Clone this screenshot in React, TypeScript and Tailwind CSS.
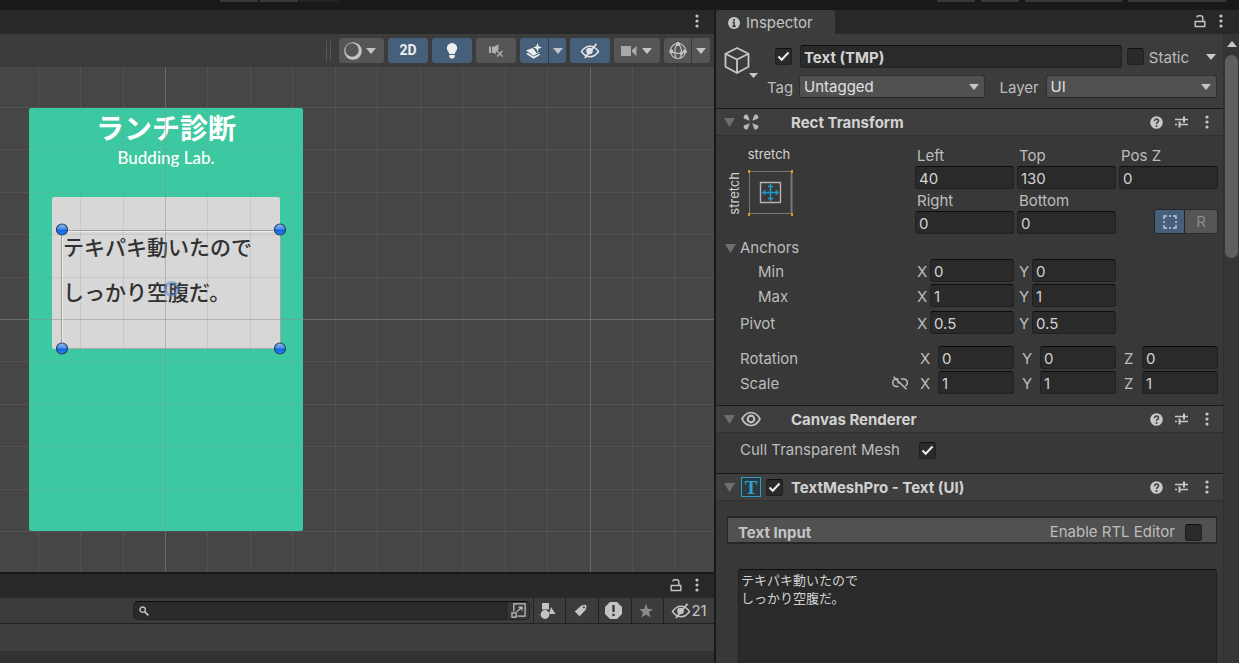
import { useState } from "react";
import type { ReactNode } from "react";

const GRID = 42.45;
const GRID_X = 165;
const GRID_Y = 252;

const steps = Array.from({ length: 61 }, (_, i) => i - 20);

function Triangle({ className = "" }: { className?: string }) {
  return (
    <svg viewBox="0 0 10 6" className={`h-[6px] w-[10px] shrink-0 pointer-events-none ${className}`} fill="currentColor">
      <path d="M0 0h10L5 6z" />
    </svg>
  );
}

function Foldout() {
  return (
    <svg viewBox="0 0 11 9" className="h-[9px] w-[11px] shrink-0 text-[#6e6e6e]" fill="currentColor">
      <path d="M0 0h11L5.5 9z" />
    </svg>
  );
}

function Kebab() {
  return (
    <svg viewBox="0 0 4 14" className="h-[14px] w-[4px]" fill="currentColor">
      <circle cx="2" cy="2" r="1.6" />
      <circle cx="2" cy="7" r="1.6" />
      <circle cx="2" cy="12" r="1.6" />
    </svg>
  );
}

function Unlocked() {
  return (
    <svg viewBox="0 0 12 13" className="h-[13px] w-[12px]" fill="none" stroke="currentColor" strokeWidth="1.4">
      <path d="M1.2 6.500h9.600v5H1.200z" />
      <path d="M3 2.500V2C3 1.200 3.800.8 5 .8h1.600c1.300 0 2.200.8 2.200 2v3.700" />
    </svg>
  );
}

function EyeOff({ className = "" }: { className?: string }) {
  return (
    <svg viewBox="0 0 20 16" className={`h-[16px] w-[20px] shrink-0 ${className}`} fill="none" stroke="currentColor">
      <path d="M1.500 8.500C4 4.800 6.800 3.200 10 3.200s6 1.600 8.500 5.300c-2.500 3.600-5.300 5.200-8.500 5.200s-6-1.600-8.500-5.200z" strokeWidth="1.500" />
      <circle cx="9.500" cy="8" r="3.300" fill="currentColor" stroke="none" />
      <path d="M16.500.8 4.800 15" strokeWidth="1.800" />
    </svg>
  );
}

function Checkbox({ label, checked = false }: { label: string; checked?: boolean }) {
  return (
    <span className="relative flex size-[17px] shrink-0">
      <input
        type="checkbox"
        aria-label={label}
        defaultChecked={checked}
        className="peer size-full appearance-none rounded-[3px] border border-[#1f1f1f] border-t-[#0f0f0f] bg-[#2a2a2a]"
      />
      <svg
        viewBox="0 0 17 17"
        className="pointer-events-none absolute inset-0 hidden peer-checked:block"
        fill="none"
        stroke="#eeeeee"
        strokeWidth="2"
      >
        <path d="M3.500 8.500l3.200 3.200L13.500 4.500" />
      </svg>
    </span>
  );
}

function Field({ label, value, wide = false }: { label: string; value: string; wide?: boolean }) {
  return (
    <label className="flex items-center pl-[2px]">
      <span className={wide ? "w-[21px] shrink-0 pl-[3px] pt-[2px]" : "w-[13px] shrink-0 pt-[2px]"}>{label}</span>
      <Box value={value} />
    </label>
  );
}

function Box({ value, label }: { value: string; label?: string }) {
  return (
    <input
      type="text"
      aria-label={label}
      defaultValue={value}
      className="h-[23px] w-full min-w-0 rounded-[3px] border border-[#212121] border-t-[#0d0d0d] bg-[#2a2a2a] px-[3px] pt-[2px] text-[#d2d2d2] outline-none"
    />
  );
}

function Stacked({ label, value }: { label: string; value: string }) {
  return (
    <label className="flex flex-col">
      <span className="h-5 pl-[2px] leading-5">{label}</span>
      <Box value={value} />
    </label>
  );
}

function Dropdown({ label, value }: { label: string; value: string }) {
  return (
    <span className="relative flex w-full items-center">
      <select
        aria-label={label}
        className="h-[23px] w-full appearance-none rounded-[3px] border border-[#303030] border-b-[#242424] bg-[#515151] px-1 text-[#e0e0e0] outline-none"
      >
        <option>{value}</option>
      </select>
      <Triangle className="absolute right-[6px] text-[#c4c4c4]" />
    </span>
  );
}

function Row({ label, icon, indent = false, children }: { label: string; icon?: ReactNode; indent?: boolean; children?: ReactNode }) {
  return (
    <div className="flex items-center pr-[5px]">
      <div className={`flex flex-1 items-center justify-between pr-[7px] ${indent ? "pl-[42px]" : "pl-6"}`}>
        <span className="pt-[2px]">{label}</span>
        {icon}
      </div>
      <div className="grid w-[303px] grid-cols-3 gap-[3px]">{children}</div>
    </div>
  );
}

function SectionHeader({ title, icon, children }: { title: string; icon: ReactNode; children?: ReactNode }) {
  return (
    <header className="flex h-7 shrink-0 items-center border-y border-t-[#1a1a1a] border-b-[#303030] bg-[#3e3e3e] pl-2 pr-[14px]">
      <Foldout />
      <span className="flex w-[56px] items-center gap-[5px] pl-[6px]">
        {icon}
        {children}
      </span>
      <h2 className="flex-1 pt-[2px] font-bold text-[#d2d2d2]">{title}</h2>
      <div className="flex items-center text-[#c8c8c8]">
        <button aria-label="Help">
          <svg viewBox="0 0 13 13" className="size-[13px]">
            <circle cx="6.500" cy="6.500" r="6.300" fill="currentColor" />
            <path d="M4.500 5.200c0-1.300.8-2.100 2-2.100s2 .8 2 1.800c0 1.400-2 1.400-2 3" fill="none" stroke="#3e3e3e" strokeWidth="1.500" />
            <circle cx="6.500" cy="10" r="1" fill="#3e3e3e" />
          </svg>
        </button>
        <button aria-label="Presets" className="ml-3">
          <svg viewBox="0 0 13 12" className="h-[12px] w-[13px]" fill="none" stroke="currentColor">
            <path d="M0 3.500h8M10 3.500h3M0 8.500h2M5 8.500h8" strokeWidth="1.400" />
            <path d="M9 .5v6M4.500 5.500v6" strokeWidth="2" />
          </svg>
        </button>
        <button aria-label="More" className="ml-[17px]">
          <Kebab />
        </button>
      </div>
    </header>
  );
}

function SceneToolbar() {
  return (
    <div className="flex h-[33px] shrink-0 items-center justify-end gap-1 bg-[#3c3c3c] pr-1 text-[#c4c4c4]">
      <span className="mr-1 h-5 w-[5px] border-x border-[#585858]" />
      <button aria-label="Shading" className="flex h-[25px] w-[45px] items-center justify-center gap-1 rounded-[3px] bg-[#555555] pr-[3px]">
        <svg viewBox="0 0 18 18" className="size-[18px]">
          <circle cx="9" cy="9" r="8.800" fill="currentColor" />
          <circle cx="8" cy="8" r="6.700" fill="#555555" />
        </svg>
        <Triangle />
      </button>
      <button className="h-[25px] w-10 rounded-[3px] bg-[#46607c] font-[Roboto] text-[14px] font-bold text-[#eeeeee]">2D</button>
      <button aria-label="Lighting" className="flex h-[25px] w-10 items-center justify-center rounded-[3px] bg-[#46607c] text-[#eeeeee]">
        <svg viewBox="0 0 12 16" className="h-[16px] w-[12px]" fill="currentColor">
          <path d="M6 0a5.200 5.200 0 0 0-5.200 5.200C.8 7.500 3 8.600 3.300 11h5.400c.3-2.400 2.500-3.500 2.500-5.800A5.200 5.200 0 0 0 6 0z" />
          <path d="M3.300 12h5.400v1.200c0 1.400-1.200 2.300-2.700 2.300s-2.700-.9-2.700-2.300z" />
        </svg>
      </button>
      <button aria-label="Audio" className="flex h-[25px] w-10 items-center justify-center rounded-[3px] bg-[#555555] text-[#b0b0b0]">
        <svg viewBox="0 0 14 13" className="h-[13px] w-[14px]" fill="none" stroke="currentColor">
          <path d="M1 2.500v6.500" strokeWidth="2" />
          <path d="M3 2.500h2.500L9.500.3v5.500L6.500 8.500V11L5 9H3z" fill="currentColor" stroke="none" />
          <path d="M8 7l5.500 5.500M13.500 7L8 12.500" strokeWidth="1.400" />
        </svg>
      </button>
      <div className="flex gap-px">
        <button aria-label="Effects" className="flex h-[25px] w-7 items-center justify-center rounded-l-[3px] bg-[#46607c] text-[#eeeeee]">
          <svg viewBox="0 0 16 16" className="size-[16px]" fill="currentColor">
            <path d="M11.500 0l1.100 3.300L16 4.500l-3.400 1.200L11.500 9l-1.100-3.300L7 4.500l3.400-1.200z" />
            <path d="M0 7.500L6.500 5l1.800 1.800 2 3.200 4.200-1.200-6.700 4z" />
            <path d="M0 10.800l2-.8 5.800 3.600 5-2.600 1.700.7-6.800 4.100z" />
          </svg>
        </button>
        <button aria-label="Effects menu" className="flex h-[25px] w-[17px] items-center justify-center rounded-r-[3px] bg-[#46607c]">
          <Triangle />
        </button>
      </div>
      <button aria-label="Scene visibility" className="flex h-[25px] w-10 items-center justify-center rounded-[3px] bg-[#46607c] text-[#e4e4e4]">
        <EyeOff />
      </button>
      <button aria-label="Camera" className="flex h-[25px] w-[46px] items-center justify-center gap-[5px] rounded-[3px] bg-[#555555] pr-[2px]">
        <svg viewBox="0 0 16 12" className="h-[12px] w-[16px] text-[#a8a8a8]" fill="currentColor">
          <path d="M0 1h10v10H0zM11 5l4.500-4v10L11 7z" />
        </svg>
        <Triangle />
      </button>
      <div className="flex gap-px">
        <button aria-label="Gizmos" className="flex h-[25px] w-[27px] items-center justify-center rounded-l-[3px] bg-[#555555]">
          <svg viewBox="0 0 18 18" className="size-[18px]" fill="none" stroke="currentColor" strokeWidth="1.200">
            <circle cx="9" cy="9" r="7.500" />
            <path d="M9 1.500C5.500 4.500 5 11 7 16.500M9 1.500C13 5 13.500 11 11 16M1.500 9.500c4 2.500 11 2.500 15 0" />
            <circle cx="9" cy="2" r="1.500" fill="currentColor" />
            <circle cx="2.300" cy="9.500" r="1.500" fill="currentColor" />
            <circle cx="15.800" cy="9.500" r="1.500" fill="currentColor" />
            <circle cx="12.300" cy="11.200" r="1.200" fill="currentColor" />
          </svg>
        </button>
        <button aria-label="Gizmos menu" className="flex h-[25px] w-[18px] items-center justify-center rounded-r-[3px] bg-[#555555]">
          <Triangle />
        </button>
      </div>
    </div>
  );
}

function Handle({ x, y }: { x: number; y: number }) {
  return <circle cx={x} cy={y} r="5.500" fill="url(#handle)" stroke="#2b3f5e" strokeWidth="1.200" />;
}

function SceneView() {
  return (
    <div className="relative min-h-0 flex-1 overflow-hidden bg-[#464646]">
      <div className="absolute left-[29px] top-[41px] h-[423px] w-[274px] rounded-[2px] bg-[#3cc8a0] text-center text-white">
        <h1 className="font-['Noto_Sans_CJK_JP',sans-serif] text-[28px] font-bold leading-[38px]">ランチ診断</h1>
        <p className="mt-[2px] font-[Lato,sans-serif] text-[17px] font-medium leading-5">Budding Lab.</p>
        <div className="mx-[23px] mt-[29px] h-[152px] rounded-[2px] bg-[#d7d7d7] pl-[11px] pt-[27px] text-left font-['Noto_Sans_CJK_JP',sans-serif] text-[21px] font-medium leading-[45px] text-[#303030]">
          <p>テキパキ動いたので</p>
          <p>しっかり空腹だ。</p>
        </div>
      </div>
      <svg className="pointer-events-none absolute inset-0 size-full">
        <defs>
          <linearGradient id="handle" x1="0" y1="0" x2="0" y2="1">
            <stop offset="0" stopColor="#8dbcf2" />
            <stop offset="0.450" stopColor="#4a90ea" />
            <stop offset="0.550" stopColor="#0f62e4" />
            <stop offset="1" stopColor="#2f86f5" />
          </linearGradient>
        </defs>
        {steps.map((n) => {
          const x = Math.round(GRID_X + n * GRID) + 0.5;
          const y = Math.round(GRID_Y + n * GRID) + 0.5;
          const major = n % 10 === 0;
          return (
            <g key={n} stroke={major ? "#8c8c8c" : "#8a8a8a"} strokeOpacity={major ? 0.5 : 0.18}>
              <line x1={x} x2={x} y1="0" y2="100%" />
              <line x1="0" x2="100%" y1={y} y2={y} />
            </g>
          );
        })}
        <path d="M62.500 164.500H280.500V281.500H62.500z" fill="none" stroke="#f4f4f4" strokeOpacity="0.700" />
        <path d="M61.500 163.500H280.500V281.500H61.500z" fill="none" stroke="#7d7d7d" strokeOpacity="0.600" />
        <circle cx="171.500" cy="222" r="6.500" fill="#5a8ccf" fillOpacity="0.150" stroke="#5a8ccf" strokeOpacity="0.500" strokeWidth="3" />
        <Handle x={62} y={162.5} />
        <Handle x={280} y={162.5} />
        <Handle x={62} y={281.5} />
        <Handle x={280} y={281.5} />
      </svg>
    </div>
  );
}

function ProjectPanel() {
  return (
    <section className="flex shrink-0 flex-col border-t-2 border-[#191919] text-[#c4c4c4]">
      <div className="flex h-6 items-center justify-end gap-[13px] bg-[#282828] pb-[2px] pr-[15px]">
        <button aria-label="Lock">
          <Unlocked />
        </button>
        <button aria-label="More">
          <Kebab />
        </button>
      </div>
      <div className="flex h-[26px] border-b border-[#222222] bg-[#3c3c3c]">
        <div className="my-[3px] ml-[133px] mr-[3px] flex flex-1 items-center overflow-hidden rounded-[5px] border border-[#212121] border-t-[#0d0d0d] bg-[#2a2a2a]">
          <svg viewBox="0 0 10 10" className="ml-[5px] size-[10px] shrink-0" fill="none" stroke="currentColor">
            <circle cx="3.700" cy="3.700" r="2.700" strokeWidth="1.400" />
            <path d="M5.800 5.800l3.500 3.500" strokeWidth="1.800" />
          </svg>
          <input type="search" aria-label="Search" className="h-full min-w-0 flex-1 bg-transparent px-1 outline-none" />
          <button aria-label="Open search window" className="flex h-full w-[21px] items-center justify-center bg-[#383838]">
            <svg viewBox="0 0 16 16" className="size-[15px]" fill="none" stroke="currentColor" strokeWidth="1.300">
              <path d="M3 9V1h12v13H7M1 10.500h4.500V15H1zM6 9.500L11.500 4.500M8 4.300h3.700V8" />
            </svg>
          </button>
        </div>
        <button aria-label="Filter by type" className="flex w-8 items-center justify-center border-l border-[#222222] pr-[3px]">
          <svg viewBox="0 0 16 16" className="size-[16px]" fill="currentColor">
            <path d="M2 0h7v6.500H2zM11 4l4.500 7H9z" />
            <circle cx="5" cy="11.500" r="4.400" />
          </svg>
        </button>
        <button aria-label="Filter by label" className="flex w-[33px] items-center justify-center border-l border-[#222222] pr-1">
          <svg viewBox="0 0 14 14" className="size-[13px]" fill="currentColor">
            <path fillRule="evenodd" d="M8 1.500L12.500.8 13.500 1.800 12.800 6 6 13.200.8 8.200zM10.700 2.500a1.100 1.100 0 1 0 .01 0z" />
          </svg>
        </button>
        <button aria-label="Import log" className="flex w-[33px] items-center justify-center border-l border-[#222222] pr-[3px]">
          <svg viewBox="0 0 17 17" className="size-[17px]">
            <path d="M5 0h7l5 5v7l-5 5H5l-5-5V5z" fill="currentColor" />
            <path d="M8.500 3v7M8.500 11.800V14" stroke="#333333" strokeWidth="2.200" />
          </svg>
        </button>
        <button aria-label="Favorites" className="flex w-8 items-center justify-center border-l border-[#222222] pr-[3px] text-[#8a8a8a]">
          <svg viewBox="0 0 14 14" className="size-[14px]" fill="currentColor">
            <path d="M7 0l2 5h5l-4 3.300 1.600 5.200L7 10.400l-4.600 3.100L4 8.300 0 5h5z" />
          </svg>
        </button>
        <button className="flex w-[51px] items-center justify-center border-l border-[#222222]">
          <EyeOff />
          <span className="pt-px text-[15px]">21</span>
        </button>
      </div>
      <div className="h-[27px] bg-[#3f3f3f]" />
      <div className="h-3 bg-[#323232]" />
    </section>
  );
}

function AnchorPreview() {
  return (
    <div className="flex-1 pl-[10px] pt-[10px] text-[13px] text-[#d2d2d2]">
      <p className="w-[86px] text-center leading-4">stretch</p>
      <div className="mt-[7px] flex items-center gap-1">
        <span className="rotate-180 text-center leading-4 [writing-mode:vertical-rl]">stretch</span>
        <button aria-label="Anchor presets">
          <svg viewBox="0 0 48 48" className="size-[48px]" fill="none">
            <path d="M3.500 2.500h42v42h-42z" stroke="#777777" />
            <path d="M45.500 2v43" stroke="#777777" strokeWidth="2" />
            <path d="M14.500 13.500h20v20h-20z" stroke="#b4b4b4" strokeWidth="1.400" />
            <path d="M24.500 15v17M16 23.500h17M22 17.500h5M22 29.500h5M18.500 21v5M30.500 21v5" stroke="#1c9ac8" strokeWidth="1.500" />
            <path d="M2 1h2v3H2zM45 1h2v3h-2zM2 44h2v3H2zM45 44h2v3h-2z" fill="#d4a017" />
          </svg>
        </button>
      </div>
    </div>
  );
}

function Inspector() {
  const [text, setText] = useState("テキパキ動いたので\nしっかり空腹だ。");

  return (
    <aside className="flex w-[525px] shrink-0 flex-col border-l-2 border-[#191919] bg-[#383838]">
      <div className="flex h-6 shrink-0 items-center justify-between bg-[#282828] pr-4 text-[#c4c4c4]">
        <div className="flex h-full w-[119px] items-center gap-[6px] rounded-t-[3px] bg-[#3c3c3c] pl-3 pt-[2px] text-[15px]">
          <svg viewBox="0 0 12 12" className="size-[12px]">
            <circle cx="6" cy="6" r="6" fill="currentColor" />
            <path d="M6 2v2M4.500 5.200H6V9M4.300 9.300h3.400" fill="none" stroke="#333333" strokeWidth="1.500" />
          </svg>
          Inspector
        </div>
        <div className="flex items-center gap-[13px] pb-[2px]">
          <button aria-label="Lock">
            <Unlocked />
          </button>
          <button aria-label="More">
            <Kebab />
          </button>
        </div>
      </div>

      <div className="flex min-h-0 flex-1">
        <div className="flex min-w-0 flex-1 flex-col text-[15px] leading-5 text-[#bdbdbd]">
          <div className="flex shrink-0 bg-[#3c3c3c] pb-[10px] pl-2 pr-[6px] pt-[11px]">
            <div className="w-[43px] text-[#c8c8c8]">
              <svg viewBox="0 0 36 36" className="size-[36px]" fill="none" stroke="currentColor" strokeWidth="1.800" strokeLinejoin="round">
                <path d="M13 3l11.500 5.800v13L13 28 1.500 21.800v-13zM1.500 8.800L13 14.500l11.500-5.700M13 14.500V28" />
                <path d="M25 28h9l-4.500 5z" fill="currentColor" stroke="none" />
              </svg>
            </div>
            <div className="flex flex-1 flex-col gap-[7px]">
              <div className="flex items-center gap-[5px] pl-2">
                <Checkbox label="Active" checked />
                <input
                  type="text"
                  aria-label="Name"
                  defaultValue="Text (TMP)"
                  className="ml-[3px] h-[23px] min-w-0 flex-1 rounded-[3px] border border-[#212121] border-t-[#0d0d0d] bg-[#2a2a2a] px-[3px] pt-[2px] font-bold text-[#d2d2d2] outline-none"
                />
                <Checkbox label="Static" />
                <span className="flex-none pt-[2px]">Static</span>
                <button aria-label="Static flags" className="ml-3 mr-px">
                  <Triangle className="text-[#c8c8c8]" />
                </button>
              </div>
              <div className="flex items-center">
                <label className="flex flex-[218] items-center">
                  <span className="w-8 shrink-0 pt-[2px]">Tag</span>
                  <Dropdown label="Tag" value="Untagged" />
                </label>
                <label className="ml-[15px] flex flex-[218] items-center">
                  <span className="w-[46px] shrink-0 pt-[2px]">Layer</span>
                  <Dropdown label="Layer" value="UI" />
                </label>
              </div>
            </div>
          </div>

          <SectionHeader
            title="Rect Transform"
            icon={
              <svg viewBox="0 0 16 16" className="ml-[2px] size-[16px] text-[#b8b8b8]" fill="currentColor">
                <path d="M6.800 6.800L.8 4.500C0 2 2 0 4.500.8z" />
                <path d="M9.200 6.800l6-2.300C16 2 14 0 11.500.8z" />
                <path d="M6.800 9.200l-6 2.300C0 14 2 16 4.500 15.200z" />
                <path d="M9.200 9.200l6 2.300c.8 2.500-1.200 4.500-3.700 3.700z" />
              </svg>
            }
          />
          <section className="flex shrink-0 flex-col gap-[2px] pb-[11px]">
            <div className="flex pr-[5px]">
              <AnchorPreview />
              <div className="grid w-[303px] grid-cols-3 gap-x-[3px] gap-y-[2px] pt-[10px]">
                <Stacked label="Left" value="40" />
                <Stacked label="Top" value="130" />
                <Stacked label="Pos Z" value="0" />
                <Stacked label="Right" value="0" />
                <Stacked label="Bottom" value="0" />
                <div className="flex items-end justify-end">
                  <button aria-label="Blueprint mode" className="flex h-[25px] w-[31px] items-center justify-center rounded-l-[3px] border border-[#242424] bg-[#46607c]">
                    <svg viewBox="0 0 14 14" className="size-[14px]" fill="none" stroke="#c4ccd4" strokeWidth="1.400">
                      <path d="M1 4V1h3M6 1h2M10 1h3v3M13 6v2M13 10v3h-3M8 13H6M4 13H1v-3M1 8V6" />
                    </svg>
                  </button>
                  <button className="h-[25px] w-[33px] rounded-r-[3px] border border-l-0 border-[#2c2c2c] bg-[#555555] text-[15px] text-[#8c8c8c]">R</button>
                </div>
              </div>
            </div>
            <div className="flex h-[21px] items-center gap-1 pl-[9px] pt-[3px]">
              <Foldout />
              Anchors
            </div>
            <Row label="Min" indent>
              <Field label="X" value="0" />
              <Field label="Y" value="0" />
            </Row>
            <Row label="Max" indent>
              <Field label="X" value="1" />
              <Field label="Y" value="1" />
            </Row>
            <div className="mt-[2px]">
              <Row label="Pivot">
                <Field label="X" value="0.5" />
                <Field label="Y" value="0.5" />
              </Row>
            </div>
            <div className="mt-[10px]">
              <Row label="Rotation">
                <Field label="X" value="0" wide />
                <Field label="Y" value="0" wide />
                <Field label="Z" value="0" wide />
              </Row>
            </div>
            <Row
              label="Scale"
              icon={
                <button aria-label="Constrain proportions">
                  <svg viewBox="0 0 16 14" className="h-[14px] w-[16px]" fill="none" stroke="currentColor" strokeWidth="1.500">
                    <path d="M6.500 3H4.500a3.700 3.700 0 0 0 0 7.500h2M9 3h2.500a3.700 3.700 0 0 1 1.800 7M5.500 6.800h2M1.500.8l13 12.500" />
                  </svg>
                </button>
              }
            >
              <Field label="X" value="1" wide />
              <Field label="Y" value="1" wide />
              <Field label="Z" value="1" wide />
            </Row>
          </section>

          <SectionHeader
            title="Canvas Renderer"
            icon={
              <svg viewBox="0 0 20 16" className="h-[16px] w-[20px] text-[#c0c0c0]" fill="none" stroke="currentColor">
                <path d="M1 8c2.500-4.500 5.500-6.500 9-6.500s6.500 2 9 6.500c-2.500 4.500-5.500 6.500-9 6.500S3.500 12.500 1 8z" strokeWidth="1.700" />
                <circle cx="10" cy="8" r="3.300" strokeWidth="2.200" />
              </svg>
            }
          />
          <label className="flex h-10 shrink-0 items-center gap-[19px] pb-[6px] pl-6">
            Cull Transparent Mesh
            <Checkbox label="Cull Transparent Mesh" checked />
          </label>

          <SectionHeader
            title="TextMeshPro - Text (UI)"
            icon={
              <span className="flex size-[20px] shrink-0 items-center justify-center border border-[#2c9cc4] bg-[#2c3a42] font-['Liberation_Serif',serif] text-[19px] font-bold leading-none text-[#2fa4cf]">
                T
              </span>
            }
          >
            <Checkbox label="TextMeshPro enabled" checked />
          </SectionHeader>
          <section className="flex min-h-0 flex-1 flex-col pl-[11px] pr-[6px] pt-[15px]">
            <div className="flex h-7 shrink-0 items-center justify-between border-2 border-x border-[#262626] bg-[#515151] pl-[10px] pr-[14px] pt-1">
              <h3 className="pt-[2px] font-bold text-[#c4c4c4]">Text Input</h3>
              <label className="flex items-center gap-[10px]">
                Enable RTL Editor
                <Checkbox label="Enable RTL Editor" />
              </label>
            </div>
            <textarea
              aria-label="Text Input"
              value={text}
              onChange={(e) => setText(e.target.value)}
              className="ml-[11px] mt-[25px] min-h-0 flex-1 resize-none rounded-t-[3px] border border-b-0 border-[#212121] border-t-[#0d0d0d] bg-[#2a2a2a] px-[2px] pt-px font-['Noto_Sans_CJK_JP',sans-serif] text-[13px] leading-[18px] text-[#d2d2d2] outline-none"
            />
          </section>
        </div>

        <div className="flex w-4 shrink-0 flex-col items-center border-l border-[#303030] bg-[#353535] pt-[7px]">
          <Triangle className="rotate-180 text-[#c8c8c8]" />
          <div className="mt-2 h-[203px] w-[13px] rounded-full bg-[#5f5f5f]" />
        </div>
      </div>
    </aside>
  );
}

export default function App() {
  return (
    <div className="flex h-screen flex-col overflow-hidden bg-[#191919] font-[Inter,'Noto_Sans_CJK_JP',sans-serif]">
      <div className="flex h-[10px] shrink-0 justify-between pl-[220px] pr-[13px]">
        <div className="flex gap-[2px]">
          <span className="h-[2px] w-[38px] bg-[#383838]" />
          <span className="h-[2px] w-[38px] bg-[#383838]" />
          <span className="h-[2px] w-[38px] bg-[#242424]" />
        </div>
        <div className="flex gap-[6px]">
          <span className="h-[2px] w-[38px] bg-[#383838]" />
          <span className="h-[2px] w-[38px] bg-[#383838]" />
          <span className="h-[2px] w-[97px] bg-[#383838]" />
          <span className="h-[2px] w-[98px] bg-[#383838]" />
        </div>
      </div>
      <div className="flex min-h-0 flex-1">
        <main className="flex min-w-0 flex-1 flex-col">
          <div className="flex h-6 shrink-0 items-center justify-end bg-[#282828] pb-[2px] pr-[15px] text-[#c4c4c4]">
            <button aria-label="More">
              <Kebab />
            </button>
          </div>
          <SceneToolbar />
          <SceneView />
          <ProjectPanel />
        </main>
        <Inspector />
      </div>
    </div>
  );
}
